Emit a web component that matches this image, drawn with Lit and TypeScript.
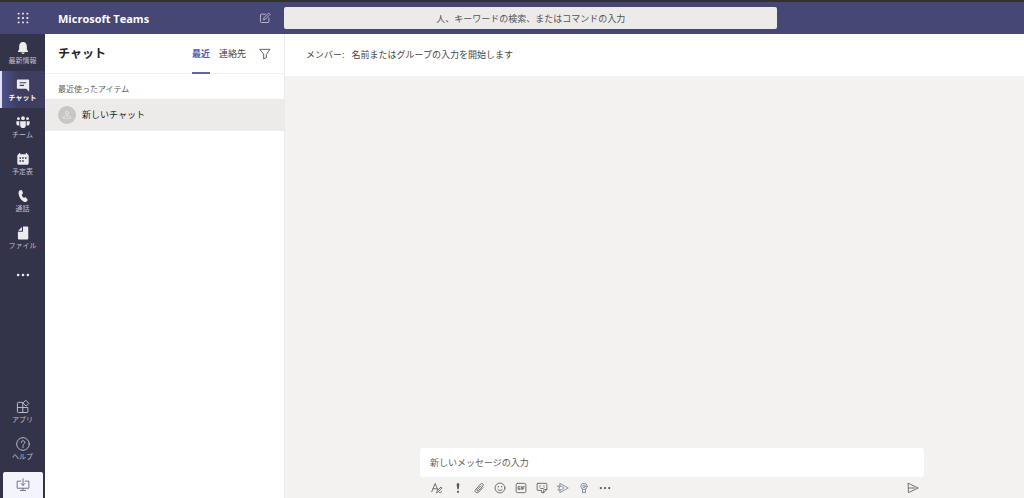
import { LitElement, html, svg, css } from "lit";
import { customElement, property, state } from "lit/decorators.js";
import { classMap } from "lit/directives/class-map.js";

const icons: Record<string, unknown> = {
  grid: svg`<g fill="currentColor">${[3, 8, 13].map((y) => [3, 8, 13].map((x) => svg`<rect x=${x - 1.1} y=${y - 1.1} width="2.2" height="2.2" rx=".6"/>`))}</g>`,
  bell: svg`<path fill="currentColor" d="M8 1.200c-2.900 0-4.400 2.200-4.400 5v3.200L2.200 12v.6h11.600V12l-1.400-2.600V6.200c0-2.800-1.500-5-4.400-5zM5.900 13.200a2.150 2 0 0 0 4.200 0z"/>`,
  chat: svg`<path fill="currentColor" fill-rule="evenodd" d="M2.200 1.600h11.600c.8 0 1.200.5 1.200 1.200v12.800L11.700 12.400H2.200c-.8 0-1.200-.5-1.200-1.200V2.800c0-.7.4-1.200 1.200-1.200zM4.200 4.900v1.200h7.600V4.900zM4.200 7.800V9h5V7.800z"/>`,
  team: svg`<g fill="currentColor"><circle cx="8" cy="3.600" r="2.200"/><circle cx="2.800" cy="4.200" r="1.600"/><circle cx="13.200" cy="4.200" r="1.600"/><path d="M4.800 7h6.400v4.700a3.200 3.200 0 0 1-6.400 0zM.4 7.200h3.400v4.700C1.600 12.300.4 11 .4 9.300zM15.600 7.200h-3.400v4.700c2.200.4 3.400-.9 3.400-2.600z"/></g>`,
  calendar: svg`<path fill="currentColor" fill-rule="evenodd" d="M3.400 1.200h1.400v1.400h6.400V1.200h1.400v1.400c1.200 0 1.900.7 1.900 1.700v8.500c0 1-.7 1.700-1.900 1.700H3.400c-1.200 0-1.900-.7-1.900-1.700V4.300c0-1 .7-1.700 1.900-1.700zM7.100 6v1.800h1.800V6zm3.100 0v1.800H12V6zM4 9.300v1.800h1.800V9.300zm3.100 0v1.800h1.800V9.300zM4 6v1.800h1.800V6z"/>`,
  phone: svg`<path fill="currentColor" d="M4.300 1.700l1.500-.5c.5-.1.900.1 1.100.6l1 2.400c.2.5.1.900-.3 1.200L6.500 6.500c.4 1.400 1.300 2.700 2.400 3.600l1.500-.5c.5-.1.9 0 1.200.4l1.500 2c.3.4.3.900-.1 1.300l-1 1c-.7.600-1.600.800-2.500.5C5.800 13 3 8.600 2.900 4.200c0-1.200.4-2.100 1.400-2.500z"/>`,
  file: svg`<path fill="currentColor" d="M8 .6h5c.6 0 1 .4 1 1v12.800c0 .6-.4 1-1 1H3.200c-.6 0-1-.4-1-1V6.600H7c.6 0 1-.4 1-1zM6.800 1v4.400H2.500z"/>`,
  more: svg`<g fill="currentColor"><circle cx="2.400" cy="8" r="1.500"/><circle cx="8" cy="8" r="1.500"/><circle cx="13.600" cy="8" r="1.500"/></g>`,
  apps: svg`<path d="M7.300 14.300H2.600c-.6 0-1-.4-1-1V3.700c0-.6.4-1 1-1h4.700zM1.600 8.600h12v4.700c0 .6-.4 1-1 1H7.300M11.500.6l3.200 3.200-3.200 3.200-3.200-3.200z"/>`,
  help: svg`<circle cx="8" cy="8" r="7.200"/><path d="M5.900 6.300c0-1.300.9-2 2.100-2s2.100.8 2.100 1.900c0 1.600-2.100 1.600-2.100 3.400M8 11v1"/>`,
  download: svg`<path d="M5.500 3.600H1.300v8.100h13.400V3.600h-4.200M5 14.200h6M8 11.700v2.500M8 .8v7.600M5.800 6.300L8 8.500l2.200-2.200"/>`,
  edit: svg`<path d="M8.500 2.800H3.200c-.8 0-1.200.4-1.200 1.200v8.800c0 .8.4 1.200 1.200 1.200H12c.8 0 1.200-.4 1.200-1.200V8M6.200 10l.6-2.600 6-6 1.900 1.900-6 6z"/>`,
  filter: svg`<path d="M1.400 1.800h13.200L9.800 8.600v3.800L6.200 14.600v-6z"/>`,
  person: svg`<circle cx="8" cy="4.500" r="2.600"/><path d="M2 12.500c0-2 1.700-3.200 6-3.200s6 1.200 6 3.200c-1.500 1.500-10.500 1.500-12 0z"/>`,
  format: svg`<path d="M1 13L5.500 2 9 10.500M2.700 9h5.200M7.500 14l1-2.700 4.800-4.600 1.400 1.500-4.800 4.600zM11 14c1 .3 2.300-.4 3.500-1.600"/>`,
  important: svg`<path fill="currentColor" stroke="none" d="M8 1.500c1.400 0 2 .9 1.800 2.200l-.9 6.100H7.100l-.9-6.100C6 2.400 6.600 1.500 8 1.500z"/><circle cx="8" cy="13" r="1.500" fill="currentColor" stroke="none"/>`,
  clip: svg`<path d="M13.300 7.600l-5.600 5.700c-2.700 2.600-6.400-.6-4.200-3.300L9.900 2.900c2.200-2.300 5.100.3 3.200 2.500l-6 6.200c-1.200 1.100-2.500-.2-1.600-1.300L10.600 5"/>`,
  smile: svg`<circle cx="8" cy="8" r="6.600"/><path d="M5 9.900c1.300 1.900 4.700 1.900 6 0"/><circle cx="5.800" cy="6.200" r=".9" fill="currentColor" stroke="none"/><circle cx="10.200" cy="6.200" r=".9" fill="currentColor" stroke="none"/>`,
  gif: svg`<rect x="1.500" y="1.800" width="13" height="12.400" rx="2"/><path d="M6.400 6.200H4.100v3.600h2.300V8.200H5.600M8.400 6v4M10.300 10V6.200h2M10.300 8.200h1.600"/>`,
  sticker: svg`<path d="M2.500 1.800h11c.6 0 1 .4 1 1v7.200l-4.300 4.200H7.400v-3H2.500c-.6 0-1-.4-1-1V2.800c0-.6.4-1 1-1zM14.500 10h-3.300c-.6 0-1 .4-1 1v3.200M5 7.800c1.300 1.700 4.700 1.700 6 0"/><circle cx="5.400" cy="5.200" r=".8" fill="currentColor" stroke="none"/><circle cx="10.600" cy="5.200" r=".8" fill="currentColor" stroke="none"/>`,
  stream: svg`<path d="M3.800 5.500V1.800L15 8 3.800 14.200v-3.700M1 5.500h4.800L9.300 8l-3.500 2.500H1L3.600 8z"/>`,
  praise: svg`<circle cx="8" cy="5.800" r="4.200"/><circle cx="8" cy="5.800" r="1.700"/><path d="M6 9.600v4.900l2-1 2 1V9.600"/>`,
  send: svg`<path d="M1.800 1.800L15 8 1.800 14.200V8zM1.800 8h8.700"/>`,
};

@customElement("ui-icon")
class UiIcon extends LitElement {
  static styles = css`
    :host { display: inline-flex; width: 14px; height: 14px; flex: none; }
    .glyph { width: 100%; height: 100%; display: block; overflow: visible; }
    .line { fill: none; stroke: currentColor; stroke-width: 1.1; stroke-linejoin: round; stroke-linecap: round; }
  `;
  @property() name = "";
  @property({ type: Boolean }) solid = false;
  render() {
    return html`<svg class=${classMap({ glyph: true, line: !this.solid })} viewBox="0 0 16 16" aria-hidden="true">${icons[this.name]}</svg>`;
  }
}

const railTop = [
  { icon: "bell", label: "最新情報" },
  { icon: "chat", label: "チャット" },
  { icon: "team", label: "チーム" },
  { icon: "calendar", label: "予定表" },
  { icon: "phone", label: "通話" },
  { icon: "file", label: "ファイル" },
];
const railBottom = [
  { icon: "apps", label: "アプリ" },
  { icon: "help", label: "ヘルプ" },
];
const tools = [
  ["format", "書式"], ["important", "重要"], ["clip", "添付"], ["smile", "絵文字"],
  ["gif", "GIF"], ["sticker", "ステッカー"], ["stream", "Stream"], ["praise", "賞賛"],
];

@customElement("app-root")
class AppRoot extends LitElement {
  @state() section = "チャット";
  @state() tab = "最近";

  static styles = css`
    :host {
      display: flex; flex-direction: column; height: 100vh; overflow: hidden;
      font-family: "Noto Sans", "Noto Sans CJK JP", sans-serif;
      font-size: 9px; line-height: 14px; color: #252423;
      background: #f3f2f1;
    }
    * { box-sizing: border-box; }
    button, input { font: inherit; color: inherit; background: none; border: 0; padding: 0; margin: 0; }
    button { display: flex; align-items: center; justify-content: center; cursor: pointer; }
    input { min-width: 0; outline: none; }
    h1, h2, h3, ul { margin: 0; padding: 0; font: inherit; list-style: none; }

    .top {
      flex: none; height: 34px; display: grid; align-items: center;
      grid-template-columns: 45px 239px minmax(0, 2fr) minmax(0, 1fr);
      background: #464775; border-top: 2px solid #323232; color: #fff;
    }
    .launcher { height: 100%; color: #e2e2f2; }
    .brand { display: flex; align-items: center; justify-content: space-between; padding: 0 13px; }
    .brand h1 { font-family: "Open Sans", sans-serif; font-size: 11px; line-height: 18px; font-weight: 700; padding-top: 1px; }
    .edit { color: #c8c8e0; }
    .edit ui-icon { width: 12px; height: 12px; }
    .search { height: 22px; border-radius: 2px; background: #ecebe9; text-align: center; color: #252423; }
    .search::placeholder { color: #55534f; opacity: 1; }

    .body { flex: 1; min-height: 0; display: grid; grid-template-columns: 45px 240px minmax(0, 1fr); }
    .rail { display: flex; flex-direction: column; justify-content: space-between; background: #33344a; color: #bfbfcd; }
    .rail-item {
      width: 100%; height: 37px; flex-direction: column; justify-content: flex-start; gap: 1px; padding-top: 7px;
      font-size: 7px; line-height: 10px; border-left: 2px solid transparent; border-right: 2px solid transparent;
    }
    .rail-item.solid ui-icon { color: #ebebf0; }
    .rail-item.active { background: linear-gradient(90deg, #4e4f88, #3d3e61 40%); border-left-color: #e2e2f6; border-right-color: #3d3e61; color: #fff; font-weight: 700; }
    .rail-more { justify-content: center; padding-top: 0; color: #ebebf0; }
    .rail-end { display: flex; flex-direction: column; align-items: center; }
    .get-app { width: 40px; height: 26px; margin-top: 5px; border-radius: 2px 2px 0 0; background: #f4f4fc; color: #6b6c8c; }

    .list { background: #fff; border-right: 1px solid #edebe9; }
    .list-head { height: 40px; padding: 0 13px; display: flex; align-items: stretch; gap: 9px; border-bottom: 1px solid #f3f2f1; }
    .list-head h2 { flex: 1; font-size: 12px; line-height: 40px; font-weight: 700; }
    .tab { height: 40px; padding-top: 2px; border-bottom: 2px solid transparent; color: #484644; }
    .tab.active { color: #5558af; font-weight: 700; border-bottom-color: #6264a7; }
    .filter { margin-left: 4px; color: #484644; }
    .filter ui-icon { width: 12px; height: 12px; }
    .list h3 { padding: 8px 13px 3px; font-size: 8px; color: #605e5c; }
    .entry { width: 100%; height: 32px; padding: 0 13px; gap: 6px; justify-content: flex-start; background: #ecebe9; }
    .avatar { width: 18px; height: 18px; border-radius: 50%; display: flex; align-items: center; justify-content: center; background: #c8c6c4; color: #f0efed; }
    .avatar ui-icon { width: 10px; height: 10px; }

    .main { display: flex; flex-direction: column; min-width: 0; }
    .members { height: 42px; background: #fff; padding: 0 21px; display: flex; align-items: center; gap: 7px; color: #484644; }
    .members input { flex: 1; }
    .members input::placeholder { color: #484644; opacity: 1; }
    .canvas { flex: 1; }
    .compose { padding: 0 100px 0 135px; }
    .message { display: block; width: 100%; height: 29px; padding: 0 10px; border-radius: 3px; background: #fff; }
    .message::placeholder { color: #605e5c; opacity: 1; }
    .tools { height: 21px; display: flex; align-items: center; padding: 0 4px 0 6px; color: #5a5856; }
    .tool { width: 21px; height: 21px; }
    .tool ui-icon { width: 12px; height: 12px; }
    .tool.blue { color: #77809a; }
    .send { margin-left: auto; width: 14px; }
  `;

  railItem(i: { icon: string; label: string }, solid: boolean) {
    const active = this.section === i.label;
    return html`<li><button class=${classMap({ "rail-item": true, solid, active })} @click=${() => (this.section = i.label)}>
      <ui-icon name=${i.icon} ?solid=${solid}></ui-icon><span>${i.label}</span></button></li>`;
  }

  render() {
    return html`
      <header class="top">
        <button class="launcher" aria-label="アプリ起動ツール"><ui-icon name="grid" solid></ui-icon></button>
        <div class="brand"><h1>Microsoft Teams</h1>
          <button class="edit" aria-label="新しいチャット"><ui-icon name="edit"></ui-icon></button></div>
        <input class="search" type="text" aria-label="検索" placeholder="人、キーワードの検索、またはコマンドの入力">
      </header>
      <div class="body">
        <nav class="rail">
          <ul>
            ${railTop.map((i) => this.railItem(i, true))}
            <li><button class="rail-item rail-more" aria-label="その他"><ui-icon name="more" solid></ui-icon></button></li>
          </ul>
          <div class="rail-end">
            <ul>${railBottom.map((i) => this.railItem(i, false))}</ul>
            <button class="get-app" aria-label="アプリのダウンロード"><ui-icon name="download"></ui-icon></button>
          </div>
        </nav>
        <section class="list">
          <div class="list-head">
            <h2>チャット</h2>
            ${["最近", "連絡先"].map((t) => html`<button class=${classMap({ tab: true, active: this.tab === t })} @click=${() => (this.tab = t)}>${t}</button>`)}
            <button class="filter" aria-label="フィルター"><ui-icon name="filter"></ui-icon></button>
          </div>
          <h3>最近使ったアイテム</h3>
          <button class="entry"><span class="avatar"><ui-icon name="person"></ui-icon></span>新しいチャット</button>
        </section>
        <main class="main">
          <div class="members"><label for="to">メンバー:</label>
            <input id="to" type="text" placeholder="名前またはグループの入力を開始します"></div>
          <div class="canvas"></div>
          <div class="compose">
            <input class="message" type="text" aria-label="メッセージ" placeholder="新しいメッセージの入力">
            <div class="tools">
              ${tools.map(([n, l]) => html`<button class=${classMap({ tool: true, blue: n === "stream" || n === "praise" })} aria-label=${l}><ui-icon name=${n}></ui-icon></button>`)}
              <button class="tool" aria-label="その他のオプション"><ui-icon name="more" solid></ui-icon></button>
              <button class="tool send" aria-label="送信"><ui-icon name="send"></ui-icon></button>
            </div>
          </div>
        </main>
      </div>`;
  }
}
